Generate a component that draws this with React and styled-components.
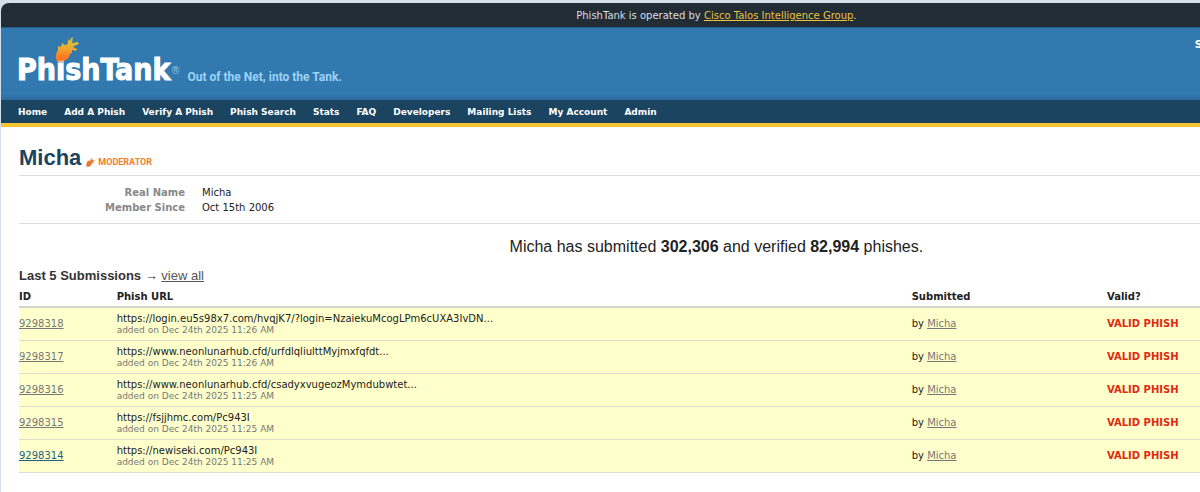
import React from 'react';
import styled, { createGlobalStyle } from 'styled-components';

const GlobalStyle = createGlobalStyle`
    body {
        margin: 0;
        background-color: #fff;
        color: #222;
        font-family: Verdana, "DejaVu Sans", sans-serif;
        font-size: 10px;
        line-height: 15px;
    }
`

const Shell = styled.div`
    overflow: hidden;
    border-left: 1px solid #d3dfea;
    min-height: 100vh;
    box-sizing: border-box;
`

const Page = styled.div`
    width: 119%;
`

const Frame = styled.div`
    padding-top: 3px;
    background-color: #d3dfea;
`

const Notice = styled.div`
    height: 24px;
    line-height: 25px;
    padding-left: 4px;
    border-bottom: 1px solid #275a80;
    border-top-left-radius: 8px;
    background-color: #212c34;
    color: #d9dfe3;
    text-align: center;
`

const NoticeLink = styled.a`
    color: #e9c340;
`

const Banner = styled.header`
    display: flex;
    justify-content: space-between;
    align-items: flex-start;
    height: 72px;
    padding-left: 16px;
    box-sizing: border-box;
    background: linear-gradient(#3279b0 92%, #2a689a);
`

const Brand = styled.div`
    display: flex;
    align-items: flex-end;
    height: 60px;
`

const Logo = styled.a`
    position: relative;
    color: #fff;
    font-family: "DejaVu Sans Condensed", "DejaVu Sans", sans-serif;
    font-size: 30px;
    font-weight: bold;
    line-height: 36px;
    text-decoration: none;
    -webkit-text-stroke: 1px #fff;
`

const LogoFish = styled.svg`
    position: absolute;
    left: 38px;
    top: -15px;
`

const Registered = styled.span`
    padding: 0 7px 10px 0;
    color: #8fc3e6;
    font-size: 10px;
`

const Tagline = styled.span`
    padding-bottom: 3px;
    color: #9bd3f5;
    font-family: Roboto, "Liberation Sans", sans-serif;
    font-size: 12px;
    font-weight: bold;
    line-height: 16px;
`

const UserMenu = styled.div`
    width: 233px;
    padding-top: 9px;
    color: #fff;
    font-weight: bold;
`

const Nav = styled.nav`
    display: flex;
    gap: 17px;
    height: 23px;
    padding-left: 17px;
    border-bottom: 4px solid #f4c531;
    background-color: #1b4460;
    line-height: 24px;
`

const NavLink = styled.a`
    color: #fff;
    font-size: 9px;
    font-weight: bold;
    text-decoration: none;
`

const Content = styled.main`
    padding: 17px 14px 20px 18px;
`

const Title = styled.div`
    display: flex;
    align-items: flex-end;
    gap: 5px;
    padding-bottom: 4px;
    border-bottom: 1px solid #ddd;
`

const UserName = styled.h1`
    margin: 0;
    color: #1b4460;
    font-family: "Liberation Sans", Arial, sans-serif;
    font-size: 22px;
    line-height: 27px;
`

const Role = styled.span`
    display: flex;
    align-items: center;
    gap: 3px;
    padding-bottom: 1px;
    color: #f0802a;
    font-family: Roboto, "Liberation Sans", sans-serif;
    font-size: 9px;
    font-weight: bold;
`

const Details = styled.dl`
    display: grid;
    grid-template-columns: 166px 1fr;
    column-gap: 17px;
    margin: 0;
    padding: 9px 0 8px;
    border-bottom: 1px solid #ddd;
`

const Term = styled.dt`
    color: #888;
    font-weight: bold;
    text-align: right;
`

const Detail = styled.dd`
    margin: 0;
`

const Totals = styled.p`
    margin: 12px 0 9px;
    font-family: "Liberation Sans", Arial, sans-serif;
    font-size: 16px;
    line-height: 22px;
    text-align: center;
`

const SectionTitle = styled.h2`
    margin: 0 0 2px;
    color: #333;
    font-family: "Liberation Sans", Arial, sans-serif;
    font-size: 13px;
    line-height: 18px;
`

const ViewAll = styled.a`
    color: #555;
    font-weight: normal;
`

const Submissions = styled.table`
    width: 100%;
    border-collapse: collapse;
    table-layout: fixed;
`

const HeadCell = styled.th`
    width: ${props => props.width};
    height: 20px;
    padding: 0;
    border-bottom: 2px solid #d5d5d0;
    box-sizing: border-box;
    text-align: left;
`

const Row = styled.tr`
    background-color: #ffffcc;
`

const Cell = styled.td`
    height: 33px;
    padding: 0;
    border-bottom: 1px solid #ddddd0;
    box-sizing: border-box;
`

const PhishUrl = styled.div`
    line-height: 12px;
`

const Added = styled.div`
    color: #777;
    font-size: 9px;
    line-height: 10px;
`

const CellLink = styled.a`
    color: ${props => props.$fresh ? '#1f6280' : '#777'};
`

const Verdict = styled.strong`
    color: #e02a12;
`

const navItems = [
    'Home', 'Add A Phish', 'Verify A Phish', 'Phish Search', 'Stats',
    'FAQ', 'Developers', 'Mailing Lists', 'My Account', 'Admin'
];

const submissions = [
    { id: 9298318, url: 'https://login.eu5s98x7.com/hvqjK7/?login=NzaiekuMcogLPm6cUXA3IvDN...', added: 'Dec 24th 2025 11:26 AM' },
    { id: 9298317, url: 'https://www.neonlunarhub.cfd/urfdlqliulttMyjmxfqfdt...', added: 'Dec 24th 2025 11:26 AM' },
    { id: 9298316, url: 'https://www.neonlunarhub.cfd/csadyxvugeozMymdubwtet...', added: 'Dec 24th 2025 11:25 AM' },
    { id: 9298315, url: 'https://fsjjhmc.com/Pc943I', added: 'Dec 24th 2025 11:25 AM' },
    { id: 9298314, url: 'https://newiseki.com/Pc943I', added: 'Dec 24th 2025 11:25 AM', fresh: true }
];

const fishPath = 'M2 24C0 20 1 16 3 13L3 9L6 10L7 6L10 8C12 8 13 7 13 5L13 2L15 4L16 1L18 0L17 6L23 5L24 7L19 9L18 10L22 12L21 14L17 13L17 16L15 17C14 21 12 23 8 24Q4 25 2 24Z';

const App = () => (
    <Shell>
        <GlobalStyle />
        <Page>
            <Frame>
                <Notice>
                    PhishTank is operated by <NoticeLink href="#talos">Cisco Talos Intelligence Group</NoticeLink>.
                </Notice>
            </Frame>
            <Banner>
                <Brand>
                    <Logo href="#home">
                        PhishTank
                        <LogoFish width="25" height="25" viewBox="0 0 25 25" aria-hidden="true">
                            <defs>
                                <linearGradient id="flame" x1="0" y1="0" x2="0" y2="1">
                                    <stop offset="0.2" stopColor="#d9bd3a" />
                                    <stop offset="0.5" stopColor="#f0a52c" />
                                    <stop offset="0.8" stopColor="#fb7c23" />
                                </linearGradient>
                            </defs>
                            <path d={fishPath} fill="url(#flame)" />
                        </LogoFish>
                    </Logo>
                    <Registered>®</Registered>
                    <Tagline>Out of the Net, into the Tank.</Tagline>
                </Brand>
                <UserMenu>S</UserMenu>
            </Banner>
            <Nav>
                {navItems.map(item => <NavLink key={item} href="#nav">{item}</NavLink>)}
            </Nav>
            <Content>
                <Title>
                    <UserName>Micha</UserName>
                    <Role>
                        <svg width="9" height="9" viewBox="0 0 25 25" aria-hidden="true">
                            <path d={fishPath} fill="#ee752b" />
                        </svg>
                        MODERATOR
                    </Role>
                </Title>
                <Details>
                    <Term>Real Name</Term>
                    <Detail>Micha</Detail>
                    <Term>Member Since</Term>
                    <Detail>Oct 15th 2006</Detail>
                </Details>
                <Totals>
                    Micha has submitted <b>302,306</b> and verified <b>82,994</b> phishes.
                </Totals>
                <SectionTitle>
                    Last 5 Submissions → <ViewAll href="#all">view all</ViewAll>
                </SectionTitle>
                <Submissions>
                    <thead>
                        <tr>
                            <HeadCell width="7%">ID</HeadCell>
                            <HeadCell width="57%">Phish URL</HeadCell>
                            <HeadCell width="14%">Submitted</HeadCell>
                            <HeadCell width="22%">Valid?</HeadCell>
                        </tr>
                    </thead>
                    <tbody>
                        {submissions.map(item => (
                            <Row key={item.id}>
                                <Cell><CellLink href="#phish" $fresh={item.fresh}>{item.id}</CellLink></Cell>
                                <Cell>
                                    <PhishUrl>{item.url}</PhishUrl>
                                    <Added>added on {item.added}</Added>
                                </Cell>
                                <Cell>by <CellLink href="#user">Micha</CellLink></Cell>
                                <Cell><Verdict>VALID PHISH</Verdict></Cell>
                            </Row>
                        ))}
                    </tbody>
                </Submissions>
            </Content>
        </Page>
    </Shell>
);

export default App;
